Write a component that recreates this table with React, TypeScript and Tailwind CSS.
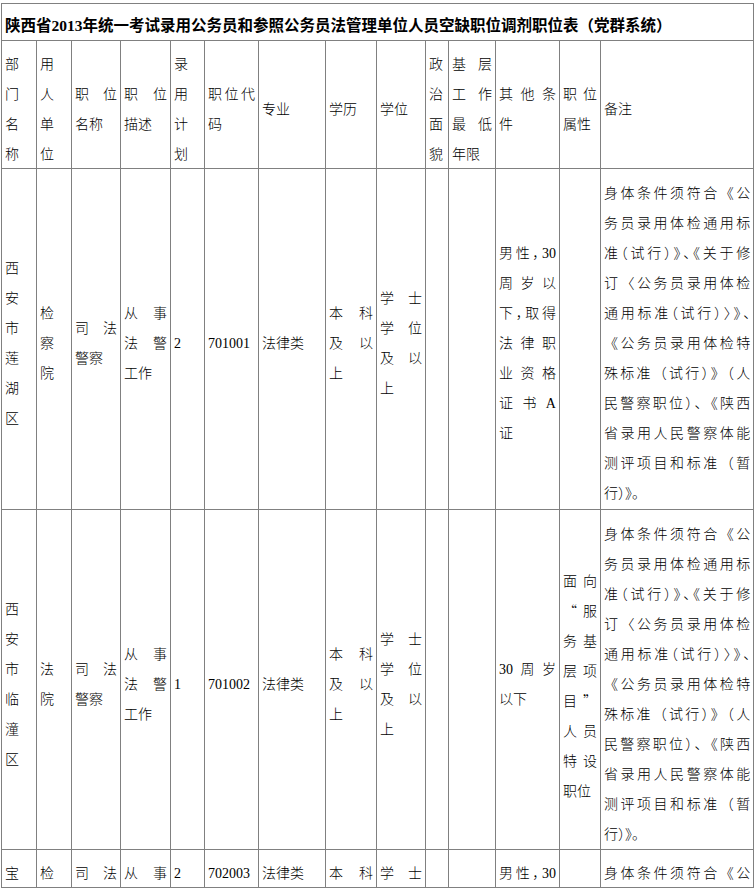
import React from "react";

type Cell = { lines: string[]; full?: boolean; cls?: string; halt?: boolean };

const c = (lines: string[], extra?: Partial<Cell>): Cell => ({ lines, ...extra });
const empty: Cell = { lines: [] };

const remarks = [
  "身体条件须符合《公",
  "务员录用体检通用标",
  "准（试行）》、《关于修",
  "订〈公务员录用体检",
  "通用标准（试行）〉》、",
  "《公务员录用体检特",
  "殊标准（试行）》（人",
  "民警察职位）、《陕西",
  "省录用人民警察体能",
  "测评项目和标准（暂",
  "行）》。",
];

const header: Cell[] = [
  c(["部", "门", "名", "称"]),
  c(["用", "人", "单", "位"]),
  c(["职位", "名称"]),
  c(["职位", "描述"]),
  c(["录", "用", "计", "划"]),
  c(["职位代", "码"]),
  c(["专业"]),
  c(["学历"]),
  c(["学位"]),
  c(["政", "治", "面", "貌"]),
  c(["基层", "工作", "最低", "年限"]),
  c(["其他条", "件"]),
  c(["职位", "属性"]),
  c(["备注"]),
];

const rows: { h: string; cells: Cell[] }[] = [
  {
    h: "h-[341px]",
    cells: [
      c(["西", "安", "市", "莲", "湖", "区"]),
      c(["检", "察", "院"]),
      c(["司法", "警察"]),
      c(["从事", "法警", "工作"]),
      c(["2"]),
      c(["701001"]),
      c(["法律类"]),
      c(["本科", "及以", "上"]),
      c(["学士", "学位", "及以", "上"]),
      empty,
      empty,
      c(["男性，30", "周岁以", "下，取得", "法律职", "业资格", "证书A", "证"], { halt: true }),
      empty,
      c(remarks),
    ],
  },
  {
    h: "h-[340px]",
    cells: [
      c(["西", "安", "市", "临", "潼", "区"]),
      c(["法", "院"]),
      c(["司法", "警察"]),
      c(["从事", "法警", "工作"]),
      c(["1"]),
      c(["701002"]),
      c(["法律类"]),
      c(["本科", "及以", "上"]),
      c(["学士", "学位", "及以", "上"]),
      empty,
      empty,
      c(["30周岁", "以下"]),
      c(["面向", "“服", "务基", "层项", "目”", "人员", "特设", "职位"], {
        cls: "font-['Noto_Sans_CJK_SC',sans-serif]",
      }),
      c(remarks),
    ],
  },
  {
    h: "h-[38px]",
    cells: [
      c(["宝"]),
      c(["检"]),
      c(["司法"], { full: true }),
      c(["从事"], { full: true }),
      c(["2"]),
      c(["702003"]),
      c(["法律类"]),
      c(["本科"], { full: true }),
      c(["学士"], { full: true }),
      empty,
      empty,
      c(["男性，30"], { full: true, halt: true }),
      empty,
      c(["身体条件须符合《公"], { full: true }),
    ],
  },
];

const widths = [
  "w-[35px]", "w-[35px]", "w-[49px]", "w-[50px]", "w-[34px]", "w-[54px]", "w-[67px]",
  "w-[51px]", "w-[49px]", "w-[23px]", "w-[47px]", "w-[64px]", "w-[41px]", "w-[153px]",
];

function Td({ cell }: { cell: Cell }) {
  const n = cell.lines.length;
  return (
    <td className={`border border-[#808080] px-[3px] py-0 align-middle ${cell.cls ?? ""}`}>
      {cell.lines.map((line, i) => {
        // long lines of punctuation need half-width brackets to fit, like Word's compression
        const squeeze = cell.halt || line.length > 10;
        const justify = i < n - 1 || cell.full;
        return (
          <div
            key={i}
            className={`h-[30px] pt-[10px] leading-[20px] ${justify ? "[text-align-last:justify]" : "text-left"} ${
              squeeze ? "[font-feature-settings:'halt']" : ""
            }`}
          >
            {line}
          </div>
        );
      })}
    </td>
  );
}

export default function App() {
  return (
    <div className="min-h-[889px] w-[756px] bg-white pt-[3px] pl-[1px] text-[14px] font-light text-black font-['Liberation_Serif','Noto_Sans_CJK_SC',serif]">
      <table className="w-[752px] table-fixed border-collapse">
        <colgroup>
          {widths.map((w, i) => (
            <col key={i} className={w} />
          ))}
        </colgroup>
        <tbody>
          <tr className="h-[36px]">
            <td
              colSpan={14}
              className="border border-[#808080] px-[3px] pt-[8px] pb-0 align-top text-[15.5px] leading-[28px] font-bold text-black whitespace-nowrap"
            >
              陕西省2013年统一考试录用公务员和参照公务员法管理单位人员空缺职位调剂职位表（党群系统）
            </td>
          </tr>
          <tr className="h-[128px]">
            {header.map((cell, i) => (
              <Td key={i} cell={cell} />
            ))}
          </tr>
          {rows.map((row, r) => (
            <tr key={r} className={row.h}>
              {row.cells.map((cell, i) => (
                <Td key={i} cell={cell} />
              ))}
            </tr>
          ))}
        </tbody>
      </table>
    </div>
  );
}
